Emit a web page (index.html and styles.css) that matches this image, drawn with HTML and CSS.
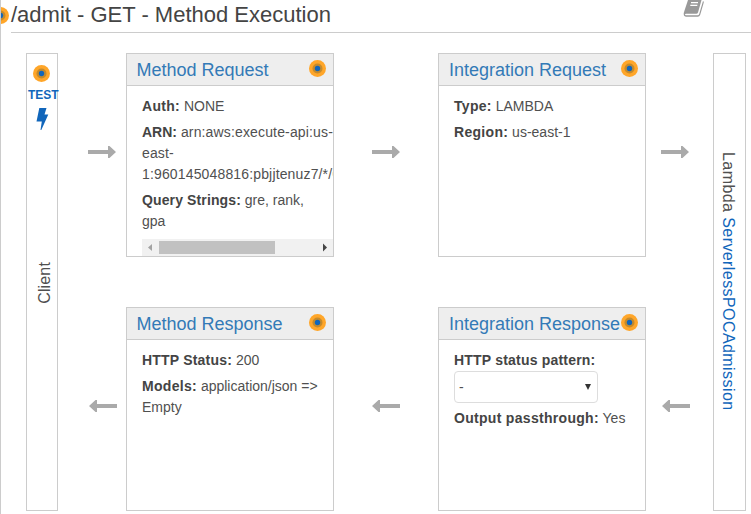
FILE: index.html
```html
<!DOCTYPE html>
<html lang="en">
<head>
<meta charset="utf-8">
<title>Method Execution</title>
<link rel="stylesheet" href="styles.css">
</head>
<body>
<svg width="0" height="0" class="defs">
  <symbol id="dot" viewBox="0 0 17 17"><circle cx="8.5" cy="8.5" r="8.5" fill="#ffa629"/><circle cx="8.5" cy="8.5" r="5" fill="#c58a2c"/><circle cx="8.5" cy="8.5" r="2.7" fill="#1166bb"/></symbol>
  <symbol id="arrow" viewBox="0 0 28 12"><path d="M0 4H20V0H21.5L28 6L21.5 12H20V8H0Z" fill="#aaa"/></symbol>
</svg>
<div class="page">
  <svg class="dot dot-edge"><use href="#dot"/></svg>
  <header class="top">
    <h1>/admit - GET - Method Execution</h1>
    <svg class="book" viewBox="0 1 22 20"><path d="M6.2 0H18.8L15 13.5Q14.6 14.8 13.2 14.8H3Q2 14.8 2 15.6Q2 16.3 3 16.3H14.6Q15.8 16.3 16.2 15L20 2Q21 2.600 20.700 3.800L17.200 15.800Q16.600 17.700 14.700 17.700H3.200Q.8 17.700 .7 15Q.6 14 1.200 12.500L5 1Q5.300 0 6.200 0Z" fill="#999"/><path d="M8 3.700H15M7.300 6.300H14.300" stroke="#fff" stroke-width="1.200"/></svg>
  </header>
  <main class="flow">
    <section class="rail client">
      <svg class="dot"><use href="#dot"/></svg>
      <a class="test">TEST</a>
      <svg class="bolt" viewBox="0 0 14 24"><path d="M4.300 0H11.500L9.500 6.500H13.300L6.300 22H5.500L6.800 13.500H1.500Z" fill="#1166bb"/></svg>
      <div class="rail-label up">Client</div>
    </section>
    <svg class="arrow a1"><use href="#arrow"/></svg>
    <section class="card c1">
      <h2><a>Method Request</a><svg class="dot"><use href="#dot"/></svg></h2>
      <div class="body">
        <p><b>Auth:</b> NONE</p>
        <p><b class="arn">ARN:</b> <span class="arn-value">arn:aws:execute-api:us-<br>east-<br>1:960145048816:pbjjtenuz7/*/GET/admit</span></p>
        <p><b class="query">Query Strings:</b> gre, rank,<br>gpa</p>
      </div>
      <div class="scrollbar">
        <svg viewBox="0 0 17 17"><path d="M6 8.500L10 5V12Z" fill="#a3a3a3"/></svg>
        <div class="thumb"></div>
        <svg viewBox="0 0 17 17"><path d="M7 8.500M11 8.500L7 4.500V12.500Z" fill="#444"/></svg>
      </div>
    </section>
    <svg class="arrow a2"><use href="#arrow"/></svg>
    <section class="card c2">
      <h2><a>Integration Request</a><svg class="dot"><use href="#dot"/></svg></h2>
      <div class="body">
        <p><b>Type:</b> LAMBDA</p>
        <p><b>Region:</b> us-east-1</p>
      </div>
    </section>
    <svg class="arrow a3"><use href="#arrow"/></svg>
    <section class="rail lambda"><div class="rail-label">Lambda <a>ServerlessPOCAdmission</a></div></section>
    <svg class="arrow back a1"><use href="#arrow"/></svg>
    <section class="card c1 lower">
      <h2><a>Method Response</a><svg class="dot"><use href="#dot"/></svg></h2>
      <div class="body">
        <p><b class="status">HTTP Status:</b> 200</p>
        <p><b>Models:</b> application/json =&gt;<br>Empty</p>
      </div>
    </section>
    <svg class="arrow back a2"><use href="#arrow"/></svg>
    <section class="card c2 lower">
      <h2><a>Integration Response</a><svg class="dot"><use href="#dot"/></svg></h2>
      <div class="body">
        <p class="tight"><b class="status">HTTP status pattern:</b></p>
        <div class="select"><span>-</span><svg viewBox="0 0 6 6"><path d="M0 0H6L3 6Z" fill="#333"/></svg></div>
        <p><b>Output passthrough:</b> Yes</p>
      </div>
    </section>
    <svg class="arrow back a3"><use href="#arrow"/></svg>
  </main>
</div>
</body>
</html>
```
FILE: styles.css
```css
* { box-sizing: border-box; }
body { margin: 0; background: #fff; color: #505050; font: 14px/21px "Liberation Sans", Arial, sans-serif; overflow: hidden; }
h1, h2, p { margin: 0; font-weight: 400; }
a { color: #337ab7; text-decoration: none; }
.defs { position: absolute; }
.page { position: relative; height: 514px; border-left: 1px solid #ccc; overflow: hidden; }
.dot { width: 17px; height: 17px; flex: none; display: block; }
.dot-edge { position: absolute; left: -9px; top: 7px; }
.top { height: 33px; margin-left: 10px; border-bottom: 1px solid #ccc; display: flex; justify-content: space-between; }
h1 { font-size: 22px; line-height: 29px; white-space: nowrap; color: #444; }
.book { width: 22px; height: 20px; margin-right: 46px; }
.flow { display: grid; grid-template-columns: 32px 68px 208px 104px 208px 67px 33px; grid-template-rows: 204px 204px; row-gap: 50px; padding: 20px 0 0 25px; }
.rail { grid-row: 1 / 3; border: 1px solid #ccc; display: flex; flex-direction: column; align-items: center; }
.client { grid-column: 1; padding-top: 11px; }
.client .dot { margin-right: 1px; }
.lambda { grid-column: 7; padding: 98px 3px 0 0; }
.test { color: #1166bb; font-size: 12px; font-weight: 700; line-height: 14px; margin: 6px 0 0 2px; width: 30px; letter-spacing: 0; }
.bolt { width: 14px; height: 24px; margin-top: 6px; }
.rail-label { writing-mode: vertical-rl; white-space: nowrap; font-size: 16px; line-height: 20px; letter-spacing: .15px; }
.lambda .rail-label { letter-spacing: .42px; }
.rail-label a { color: #1166bb; }
.up { transform: rotate(180deg); margin: 130px 0 0 5px; }
.arrow { width: 28px; height: 12px; grid-row: 1; margin-top: 93px; }
.back { grid-row: 2; transform: scaleX(-1) translateX(-1px); }
.a1 { grid-column: 2; margin-left: 30px; }
.a2 { grid-column: 4; margin-left: 38px; }
.back.a2 { margin-left: 37px; }
.a3 { grid-column: 6; margin-left: 15px; }
.card { grid-row: 1; border: 1px solid #ccc; display: flex; flex-direction: column; overflow: hidden; }
.c1 { grid-column: 3; }
.c2 { grid-column: 5; }
.lower { grid-row: 2; }
h2 { height: 32px; flex: none; background: #eee; border-bottom: 1px solid #ccc; padding: 0 7px 0 10px; display: flex; justify-content: space-between; font-size: 18px; line-height: 32px; white-space: nowrap; }
.c1 h2 { padding-left: 9.5px; }
h2 .dot { margin-top: 6px; }
.body { padding: 10px 0 0 15px; white-space: nowrap; flex: 1; min-height: 0; }
p { margin-bottom: 5px; }
.tight { margin: 0; }
b { letter-spacing: .3px; color: #444; }
.arn { letter-spacing: 0; }
.arn-value { letter-spacing: .15px; }
.query { letter-spacing: .12px; }
.status { letter-spacing: .2px; }
.scrollbar { height: 17px; flex: none; margin-left: 15px; background: #f1f1f1; display: flex; align-items: center; }
.scrollbar svg { width: 17px; height: 17px; }
.thumb { width: 116px; height: 13px; background: #c1c1c1; margin-right: auto; }
.select { width: 144px; height: 32px; border: 1px solid #ddd; border-radius: 4px; margin-bottom: 5px; padding: 0 6px 0 4px; display: flex; align-items: center; justify-content: space-between; }
.select svg { width: 6px; height: 6px; }
```
